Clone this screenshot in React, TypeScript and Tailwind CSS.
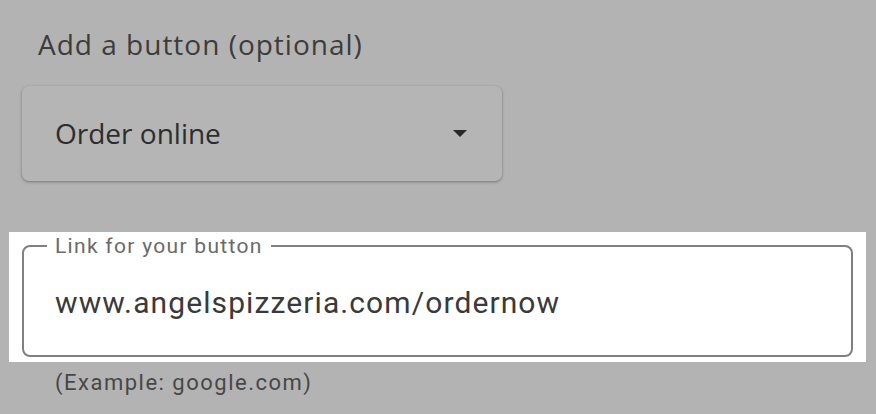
export default function App() {
  return (
    <div className="w-[876px] h-[414px] overflow-hidden bg-[#b3b3b3] font-['Roboto',sans-serif]">
      <div className="pt-[25px] pl-[38px]">
        <h2 className="text-[28px] leading-[38px] text-[#3c3c3c] font-['Open_Sans',sans-serif] tracking-[1px]">
          Add a button (optional)
        </h2>
      </div>

      <div className="ml-[22px] mt-[23px] w-[480px] h-[95px] rounded-[7px] bg-[#b5b5b5] shadow-[0_1px_3px_rgba(0,0,0,0.35)] flex items-center justify-between pl-[33px] pr-[35px]">
        <span className="text-[28px] text-[#2d2d2d] font-['Open_Sans',sans-serif] -mt-[2px]">Order online</span>
        <svg width="14" height="7" viewBox="0 0 14 7" className="shrink-0">
          <path d="M0 0h14L7 7z" fill="#2a2a2a" />
        </svg>
      </div>

      <div className="ml-[9px] mt-[51px] w-[857px] h-[130px] bg-white pt-[3px] pl-[13px]">
        <fieldset className="w-[831px] h-[122px] border-2 border-[#808080] rounded-[8px] px-0">
          <legend className="ml-[23px] px-[8px] text-[21px] leading-[22px] tracking-[1.3px] text-[#6a6a6a]">
            Link for your button
          </legend>
          <div className="pl-[31px] pt-[27px] text-[30px] leading-[38px] tracking-[1.1px] text-[#3a3a3a]">
            www.angelspizzeria.com/ordernow
          </div>
        </fieldset>
      </div>

      <p className="ml-[55px] mt-[7px] text-[22px] leading-[28px] tracking-[1.5px] text-[#474747]">
        (Example: google.com)
      </p>
    </div>
  );
}
